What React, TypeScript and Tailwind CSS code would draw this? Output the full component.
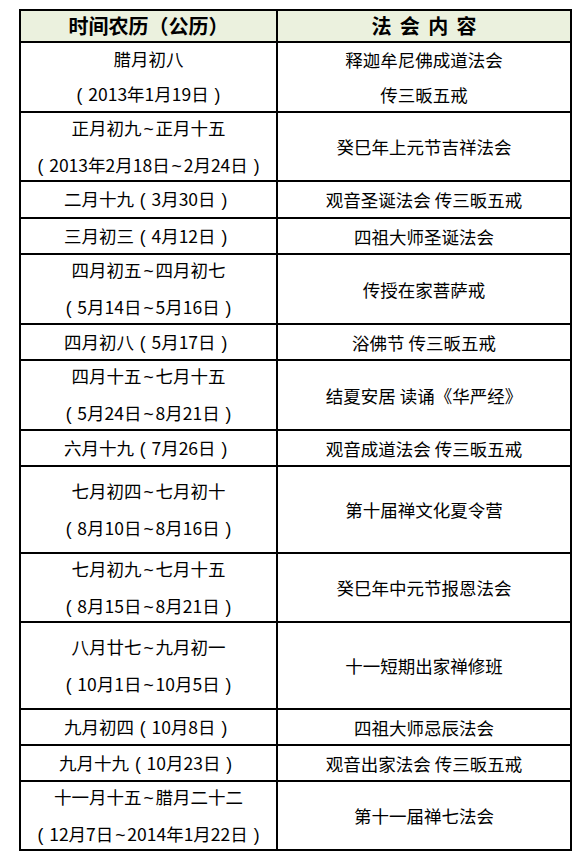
const rows: { left: string[]; right: string[]; h: number }[] = [
  { left: ["腊月初八", "（2013年1月19日）"], right: ["释迦牟尼佛成道法会", "传三昄五戒"], h: 70 },
  { left: ["正月初九～正月十五", "（2013年2月18日～2月24日）"], right: ["癸巳年上元节吉祥法会"], h: 69 },
  { left: ["二月十九（3月30日）"], right: ["观音圣诞法会 传三昄五戒"], h: 37 },
  { left: ["三月初三（4月12日）"], right: ["四祖大师圣诞法会"], h: 36 },
  { left: ["四月初五～四月初七", "（5月14日～5月16日）"], right: ["传授在家菩萨戒"], h: 70 },
  { left: ["四月初八（5月17日）"], right: ["浴佛节 传三昄五戒"], h: 36 },
  { left: ["四月十五～七月十五", "（5月24日～8月21日）"], right: ["结夏安居 读诵《华严经》"], h: 70 },
  { left: ["六月十九（7月26日）"], right: ["观音成道法会 传三昄五戒"], h: 36 },
  { left: ["七月初四～七月初十", "（8月10日～8月16日）"], right: ["第十届禅文化夏令营"], h: 87 },
  { left: ["七月初九～七月十五", "（8月15日～8月21日）"], right: ["癸巳年中元节报恩法会"], h: 69 },
  { left: ["八月廿七～九月初一", "（10月1日～10月5日）"], right: ["十一短期出家禅修班"], h: 87 },
  { left: ["九月初四（10月8日）"], right: ["四祖大师忌辰法会"], h: 36 },
  { left: ["九月十九（10月23日）"], right: ["观音出家法会 传三昄五戒"], h: 36 },
  { left: ["十一月十五～腊月二十二", "（12月7日～2014年1月22日）"], right: ["第十一届禅七法会"], h: 71 },
];

// full-width punctuation drawn centred in a 1em box, as the source font does
function Line({ text }: { text: string }) {
  const parts = text.split(/([（）～])/);
  return (
    <div>
      {parts.map((p, k) =>
        p === "（" || p === "）" ? (
          <span key={k} className="inline-block w-[1em] text-center" style={{ fontFamily: '"Liberation Sans", sans-serif' }}>
            {p === "（" ? "(" : ")"}
          </span>
        ) : p === "～" ? (
          <span key={k} className="inline-block w-[0.8em] text-center" style={{ fontFamily: '"Liberation Sans", sans-serif' }}>
            ~
          </span>
        ) : (
          <span key={k}>{p}</span>
        )
      )}
    </div>
  );
}

function Cell({ lines, left }: { lines: string[]; left?: boolean }) {
  return (
    <div
      className={
        left
          ? "flex flex-col justify-center items-center border-r-2 border-black leading-[35px] whitespace-nowrap min-h-0"
          : "flex flex-col justify-center items-center leading-[35px] whitespace-nowrap min-h-0"
      }
    >
      {lines.map((t, j) => (
        <Line key={j} text={t} />
      ))}
    </div>
  );
}

export default function App() {
  return (
    <div
      className="w-[580px] h-[862px] bg-white pl-[19px] pt-[9px] text-black"
      style={{ fontFamily: '"Microsoft YaHei", "Noto Sans CJK SC", sans-serif' }}
    >
      <div className="w-[553px] border-2 border-black text-[17.5px]">
        {/* Header */}
        <div className="grid grid-cols-[257px_1fr] grid-rows-1 h-[32px] border-b-2 border-black bg-[#ebf1de] font-bold text-[20px]">
          <div className="flex items-center justify-center border-r-2 border-black">时间农历（公历）</div>
          <div className="flex items-center justify-center tracking-[0.42em] pl-[0.42em]">法会内容</div>
        </div>
        {rows.map((r, i) => (
          <div
            key={i}
            className={
              i === rows.length - 1
                ? "grid grid-cols-[257px_1fr] grid-rows-1"
                : "grid grid-cols-[257px_1fr] grid-rows-1 border-b-2 border-black"
            }
            style={{ height: i === rows.length - 1 ? r.h - 4 : r.h }}
          >
            <Cell lines={r.left} left />
            <Cell lines={r.right} />
          </div>
        ))}
      </div>
    </div>
  );
}
